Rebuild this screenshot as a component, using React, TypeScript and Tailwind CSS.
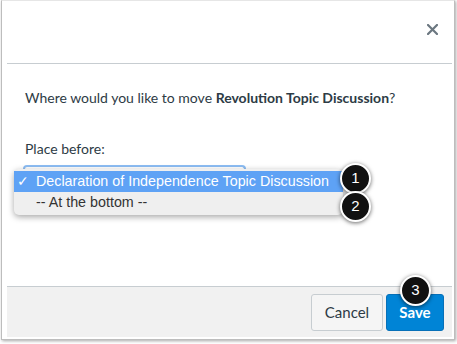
import React from "react";

function Badge({ n }: { n: number }) {
  return (
    <div className="absolute flex h-[31px] w-[31px] items-center justify-center rounded-full border-2 border-white bg-[#111] text-[15px] text-white shadow-[0_1px_4px_rgba(0,0,0,0.6)] [font-family:'Liberation_Sans',Arial,sans-serif]">
      {n}
    </div>
  );
}

export default function App() {
  return (
    <div className="relative h-[344px] w-[457px] overflow-hidden bg-white [font-family:Lato,'Liberation_Sans',sans-serif] text-[#2d3b45]">
      {/* dialog frame */}
      <div className="ml-[1px] flex h-[340px] w-[454px] flex-col border border-t-[#e6e6e6] border-[#bdbdbd] bg-white pl-[5px] pr-[2px] pb-[2px] shadow-[1px_1px_3px_rgba(0,0,0,0.35)]">
        {/* header */}
        <div className="flex h-[63px] shrink-0 items-center justify-end border-b border-[#c7cdd1] pr-[14px]">
          <svg width="11" height="11" viewBox="0 0 11 11" className="mb-[6px]">
            <path d="M1 1 L10 10 M10 1 L1 10" stroke="#6b7780" strokeWidth="2.2" strokeLinecap="square" />
          </svg>
        </div>

        {/* body */}
        <div className="relative flex-1 px-[18px] pt-[24px] text-[14px]">
          <p className="whitespace-nowrap leading-[20px]">
            Where would you like to move <span className="font-bold">Revolution Topic Discussion</span>?
          </p>
          <p className="mt-[31px] leading-[20px]">Place before:</p>
          <div className="ml-[-2px] mt-[6px] h-[12px] w-[223px] rounded-t-[4px] border-2 border-b-0 border-[#8cbdf3]" />

          {/* open select menu */}
          <div className="absolute left-[7px] top-[105px] w-[329px] rounded-[5px] bg-[#efefef] py-[2px] shadow-[0_2px_6px_rgba(0,0,0,0.35)] [font-family:'Liberation_Sans',Arial,sans-serif] text-[14.3px] text-[#222]">
            <div className="flex h-[21px] items-center bg-[#5ea2f5] text-white">
              <span className="w-[22px] pl-[3px] text-[14px]">✓</span>
              <span className="whitespace-nowrap">Declaration of Independence Topic Discussion</span>
            </div>
            <div className="flex h-[21px] items-center">
              <span className="w-[22px]" />
              <span className="whitespace-nowrap text-[#333]">-- At the bottom --</span>
            </div>
          </div>
        </div>

        {/* footer */}
        <div className="flex h-[51px] shrink-0 items-center justify-end gap-[3px] border-t border-[#c7cdd1] bg-[#f1f1f1] pr-[8px]">
          <button className="h-[37px] w-[72px] rounded-[3px] border border-[#c7cdd1] bg-[#f5f5f5] text-[15px] text-[#2d3b45]">
            Cancel
          </button>
          <button className="h-[37px] w-[58px] rounded-[3px] border border-[#0770b8] bg-[#0084d6] text-[15px] font-bold text-white">
            Save
          </button>
        </div>
      </div>

      <div className="absolute left-[340px] top-[163px]"><Badge n={1} /></div>
      <div className="absolute left-[340px] top-[191px]"><Badge n={2} /></div>
      <div className="absolute left-[400px] top-[275px]"><Badge n={3} /></div>
    </div>
  );
}
